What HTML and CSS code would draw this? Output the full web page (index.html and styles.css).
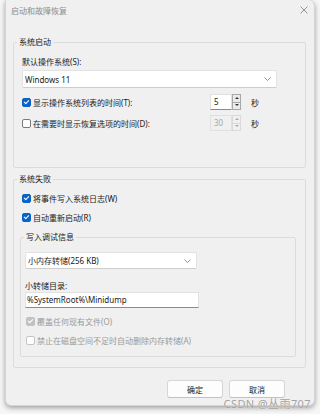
FILE: index.html
```html
<!DOCTYPE html>
<html>
<head>
    <title>启动和故障恢复</title>
    <link rel="stylesheet" href="styles.css">
</head>
<body>
    <div class="window">
        <div class="titlebar">
            <span class="title">启动和故障恢复</span>
            <svg class="close" width="8" height="8" viewBox="0 0 8 8"><path d="M0.5 0.5 L7.5 7.5 M7.5 0.5 L0.5 7.5" stroke="#8a8a8a" stroke-width="0.9"/></svg>
        </div>

        <div class="content">
            <fieldset class="group startup">
                <legend>系统启动</legend>
                <div class="group-body">
                    <div class="label">默认操作系统(S):</div>
                    <div class="combo wide">
                        <span>Windows 11</span>
                        <svg width="7" height="4" viewBox="0 0 7 4"><path d="M0.5 0.5 L3.5 3.5 L6.5 0.5" fill="none" stroke="#777" stroke-width="0.8"/></svg>
                    </div>
                    <div class="spin-row first">
                        <label class="check"><span class="box checked"></span>显示操作系统列表的时间(T):</label>
                        <div class="spinner">
                            <span class="spin-value">5</span>
                            <span class="spin-buttons"><span class="up"></span><span class="down"></span></span>
                        </div>
                        <span class="unit">秒</span>
                    </div>
                    <div class="spin-row">
                        <label class="check"><span class="box"></span>在需要时显示恢复选项的时间(D):</label>
                        <div class="spinner disabled">
                            <span class="spin-value">30</span>
                            <span class="spin-buttons"><span class="up"></span><span class="down"></span></span>
                        </div>
                        <span class="unit">秒</span>
                    </div>
                </div>
            </fieldset>

            <fieldset class="group failure">
                <legend>系统失败</legend>
                <div class="group-body">
                    <label class="check row-w"><span class="box checked"></span>将事件写入系统日志(W)</label>
                    <label class="check row-r"><span class="box checked"></span>自动重新启动(R)</label>

                    <fieldset class="group debug">
                        <legend>写入调试信息</legend>
                        <div class="debug-body">
                            <div class="combo narrow">
                                <span>小内存转储(256 KB)</span>
                                <svg width="7" height="4" viewBox="0 0 7 4"><path d="M0.5 0.5 L3.5 3.5 L6.5 0.5" fill="none" stroke="#777" stroke-width="0.8"/></svg>
                            </div>
                            <div class="label dump-label">小转储目录:</div>
                            <div class="textbox">%SystemRoot%\Minidump</div>
                            <label class="check muted row-o"><span class="box checked disabled"></span>覆盖任何现有文件(O)</label>
                            <label class="check muted row-a"><span class="box disabled"></span>禁止在磁盘空间不足时自动删除内存转储(A)</label>
                        </div>
                    </fieldset>
                </div>
            </fieldset>

            <div class="buttons">
                <button class="btn">确定</button>
                <button class="btn">取消</button>
            </div>
        </div>

        <div class="watermark">CSDN @丛雨707</div>
    </div>
</body>
</html>
```

FILE: styles.css
```css
body {
    margin: 0;
    background: #f6f6f6;
    font-family: "Noto Sans", "Noto Sans CJK SC", sans-serif;
    font-size: 8px;
    color: #1a1a1a;
    height: 414px;
    overflow: hidden;
}

.window {
    position: relative;
    margin-left: 5px;
    width: 310px;
    height: 406px;
    box-sizing: border-box;
    border: 1px solid #d4d4d4;
    border-top: none;
    border-radius: 0 6px 6px 6px;
    background: #f0f0f0;
    box-shadow: 0 2px 5px rgba(0, 0, 0, 0.35);
}

.titlebar {
    height: 20px;
    display: flex;
    align-items: center;
    justify-content: space-between;
    padding: 0 6px 0 5px;
}
.title {
    color: #8c8c8c;
    font-size: 8px;
}
.close {
    display: block;
}

.content {
    padding: 0 8px 0 7px;
}

.group {
    margin: 0;
    padding: 0;
    border: 1px solid #dcdcdc;
    border-radius: 2px;
    min-width: 0;
}
.group legend {
    padding: 0 2px;
    margin-left: 3px;
    line-height: 10px;
    color: #1a1a1a;
}
.startup {
    margin-top: 17px;
}
.failure {
    margin-top: 6px;
}

.group-body {
    padding: 9px 28px 36px 8px;
}
.failure .group-body {
    padding: 7px 9px 10px 6px;
}

.label {
    line-height: 12px;
}

.combo {
    height: 18px;
    box-sizing: border-box;
    margin-top: 2px;
    background: #fff;
    border: 1px solid #e2e2e2;
    border-bottom-color: #cdcdcd;
    border-radius: 2px;
    display: flex;
    align-items: center;
    justify-content: space-between;
    padding: 0 5px 0 2px;
}
.combo svg {
    display: block;
}
.combo.narrow {
    width: 172px;
    height: 17px;
    margin-top: 10px;
}

.check {
    display: flex;
    align-items: center;
    gap: 2px;
    height: 14px;
}
.box {
    width: 9px;
    height: 9px;
    box-sizing: border-box;
    border: 1px solid #7a7a7a;
    border-radius: 2px;
    background: #fff;
    position: relative;
}
.box.checked {
    background: #0a63c6;
    border-color: #0a63c6;
}
.box.checked::after {
    content: "";
    position: absolute;
    left: 2px;
    top: 0.5px;
    width: 2px;
    height: 4px;
    border: solid #fff;
    border-width: 0 1px 1px 0;
    transform: rotate(45deg);
}
.box.disabled {
    border-color: #c4c4c4;
}
.box.checked.disabled {
    background: #c2c2c2;
    border-color: #c2c2c2;
}
.muted {
    color: #9a9a9a;
}

.spin-row {
    display: grid;
    grid-template-columns: 188px 31px auto;
    align-items: center;
    height: 16px;
    margin-top: 5px;
}
.spin-row.first {
    margin-top: 6px;
}
.spinner {
    display: flex;
    height: 16px;
}
.spin-value {
    width: 22px;
    box-sizing: border-box;
    background: #fff;
    border: 1px solid #e0e0e0;
    border-bottom-color: #8a8a8a;
    padding-left: 3px;
    line-height: 14px;
}
.spin-buttons {
    width: 9px;
    display: flex;
    flex-direction: column;
}
.spin-buttons span {
    flex: 1;
    box-sizing: border-box;
    border: 1px solid #a8a8a8;
    background: #ebebeb;
    position: relative;
}
.spin-buttons .down {
    border-top: none;
}
.spin-buttons span::after {
    content: "";
    position: absolute;
    left: 2px;
    top: 2px;
    border-left: 2px solid transparent;
    border-right: 2px solid transparent;
}
.spin-buttons .up::after {
    border-bottom: 2px solid #333;
}
.spin-buttons .down::after {
    top: 1px;
    border-top: 2px solid #333;
}
.spinner.disabled .spin-value {
    background: #f0f0f0;
    border-color: #e0e0e0;
    color: #a8a8a8;
}
.spinner.disabled .spin-buttons span {
    background: #f0f0f0;
    border-color: #dadada;
}
.spinner.disabled .spin-buttons span::after {
    border-bottom-color: #aaa;
    border-top-color: #aaa;
}
.unit {
    padding-left: 10px;
}

.row-w,
.row-r {
    padding-left: 2px;
}
.row-r {
    margin-top: 5px;
}

.debug {
    margin-top: 8px;
}
.debug-body {
    padding: 0 0 9px 4px;
}
.dump-label {
    margin-top: 11px;
}
.textbox {
    width: 174px;
    height: 16px;
    box-sizing: border-box;
    background: #fff;
    border: 1px solid #e2e2e2;
    border-bottom-color: #8a8a8a;
    padding-left: 1px;
    line-height: 14px;
}
.row-o {
    margin-top: 6px;
    padding-left: 1px;
}
.row-a {
    margin-top: 5px;
    padding-left: 1px;
}

.buttons {
    display: flex;
    justify-content: flex-end;
    gap: 6px;
    margin-top: 12px;
    padding-right: 21px;
}
.btn {
    width: 56px;
    height: 18px;
    font-family: inherit;
    font-size: 8px;
    color: #1a1a1a;
    background: #fdfdfd;
    border: 1px solid #d6d6d6;
    border-bottom-color: #c2c2c2;
    border-radius: 3px;
    padding: 0;
}

.watermark {
    position: absolute;
    right: 3px;
    bottom: -5px;
    font-size: 11px;
    line-height: 12px;
    letter-spacing: 0.4px;
    color: #a2a2a2;
    text-shadow: 0 0 1px #fafafa;
}
```
